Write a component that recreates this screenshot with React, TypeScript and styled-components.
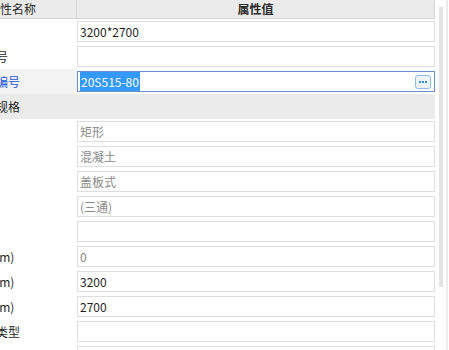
import React from "react";
import styled, { createGlobalStyle } from "styled-components";

const GlobalStyle = createGlobalStyle`
  html, body { margin: 0; padding: 0; background: #fff; overflow: hidden; }
  body { font-family: "Noto Sans CJK SC", "Noto Sans", sans-serif; font-size: 12px; color: #1f1f1f; }
`;

const Frame = styled.div`
  display: flex;
  width: 449px;
  height: 350px;
  overflow: hidden;
  background: #fff;
`;

const Viewport = styled.div`
  width: 435px;
  flex: none;
  overflow: hidden;
`;

const Table = styled.div`
  width: 487px;
  margin-left: -52px;
`;

const HeaderRow = styled.div`
  display: grid;
  grid-template-columns: 129px 358px;
  height: 19px;
`;

const HeaderCell = styled.div<{ $strong?: boolean }>`
  background: #ebebeb;
  border-bottom: 1px solid #d6d6d6;
  border-right: 1px solid #d6d6d6;
  line-height: 18px;
  text-align: center;
  color: #2a2a2a;
  font-weight: ${(p) => (p.$strong ? 600 : 400)};
  white-space: nowrap;
`;

const Row = styled.div`
  display: grid;
  grid-template-columns: 129px 358px;
  height: 25px;
`;

const Label = styled.div<{ $active?: boolean; $selected?: boolean }>`
  padding-left: 24px;
  line-height: 25px;
  white-space: nowrap;
  overflow: hidden;
  color: ${(p) => (p.$active ? "#2456e0" : "#1f1f1f")};
  background: ${(p) => (p.$selected ? "#f3f3f3" : "transparent")};
`;

const ValueCell = styled.div`
  padding-top: 2px;
`;

const Box = styled.div<{ $focused?: boolean; $readonly?: boolean }>`
  box-sizing: border-box;
  height: 21px;
  display: flex;
  align-items: center;
  padding-left: 2px;
  padding-right: 3px;
  border: 1px solid ${(p) => (p.$focused ? "#6f8fcc" : "#dedede")};
  background: #fff;
  color: ${(p) => (p.$readonly ? "#8a8a8a" : "#1f1f1f")};
  line-height: 19px;
  white-space: nowrap;
`;

const Selection = styled.span`
  background: #3399ff;
  color: #fff;
  padding: 0 1px;
`;

const MoreButton = styled.button`
  margin-left: auto;
  width: 16px;
  height: 14px;
  padding: 0;
  border: 1px solid #8dbbe9;
  border-radius: 3px;
  background: #eef4fb;
  display: flex;
  align-items: center;
  justify-content: center;
  gap: 1px;
`;

const Dot = styled.span`
  width: 2px;
  height: 2px;
  background: #3a8ee6;
`;

const GroupRow = styled.div`
  height: 25px;
  line-height: 25px;
  padding-left: 24px;
  background: #ebebeb;
  white-space: nowrap;
  color: #1f1f1f;
`;

const ScrollTrack = styled.div`
  flex: 1;
  display: flex;
  padding-top: 7px;
  padding-left: 4px;
`;

const Thumb = styled.div`
  width: 4px;
  height: 280px;
  background: #e4e4e4;
`;

const EdgeLine = styled.div`
  width: 2px;
  margin-left: auto;
  margin-right: 1px;
  margin-top: -7px;
  height: 350px;
  background: #ececec;
`;

type Item =
  | { kind: "row"; label: string; value?: string; readonly?: boolean }
  | { kind: "group"; label: string }
  | { kind: "selected"; label: string; value: string };

const items: Item[] = [
  { kind: "row", label: "尺寸", value: "3200*2700" },
  { kind: "row", label: "设备号", value: "" },
  { kind: "selected", label: "图集编号", value: "20S515-80" },
  { kind: "group", label: "尺寸规格" },
  { kind: "row", label: "形状", value: "矩形", readonly: true },
  { kind: "row", label: "材质", value: "混凝土", readonly: true },
  { kind: "row", label: "构造", value: "盖板式", readonly: true },
  { kind: "row", label: "连接", value: "(三通)", readonly: true },
  { kind: "row", label: "备注", value: "" },
  { kind: "row", label: "深(mm)", value: "0", readonly: true },
  { kind: "row", label: "长(mm)", value: "3200" },
  { kind: "row", label: "宽(mm)", value: "2700" },
  { kind: "row", label: "连接类型", value: "" },
  { kind: "row", label: "井盖", value: "" },
];

export default function App() {
  return (
    <>
      <GlobalStyle />
      <Frame>
        <Viewport>
          <Table>
            <HeaderRow>
              <HeaderCell>属性名称</HeaderCell>
              <HeaderCell $strong>属性值</HeaderCell>
            </HeaderRow>
            {items.map((it, i) => {
              if (it.kind === "group") {
                return <GroupRow key={i}>{it.label}</GroupRow>;
              }
              if (it.kind === "selected") {
                return (
                  <Row key={i}>
                    <Label $active $selected>
                      {it.label}
                    </Label>
                    <ValueCell>
                      <Box $focused>
                        <Selection>{it.value}</Selection>
                        <MoreButton aria-label="更多">
                          <Dot />
                          <Dot />
                          <Dot />
                        </MoreButton>
                      </Box>
                    </ValueCell>
                  </Row>
                );
              }
              return (
                <Row key={i}>
                  <Label>{it.label}</Label>
                  <ValueCell>
                    <Box $readonly={it.readonly}>{it.value}</Box>
                  </ValueCell>
                </Row>
              );
            })}
          </Table>
        </Viewport>
        <ScrollTrack>
          <Thumb />
          <EdgeLine />
        </ScrollTrack>
      </Frame>
    </>
  );
}
